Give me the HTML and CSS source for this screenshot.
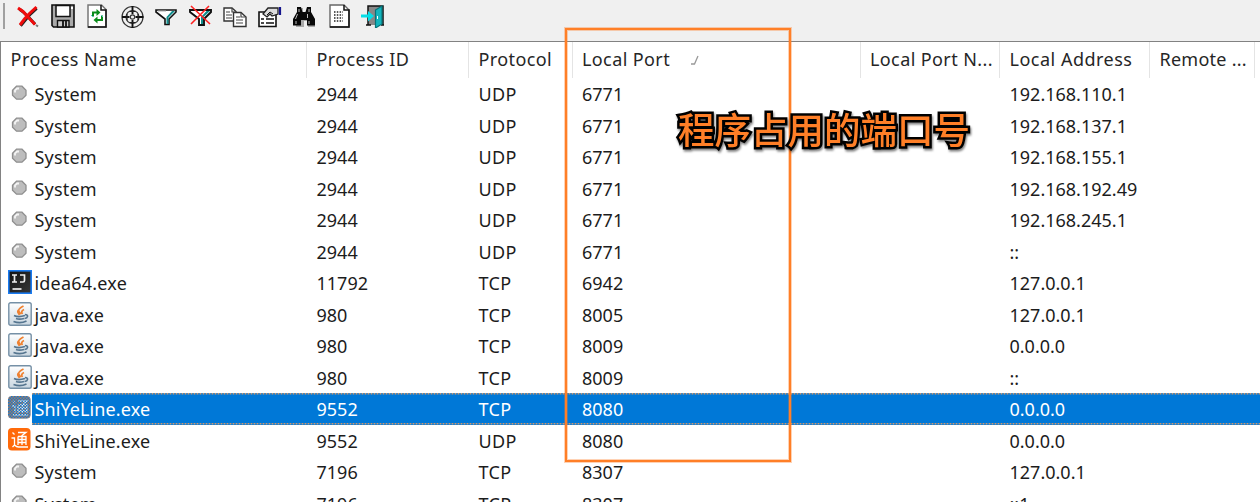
FILE: index.html
```html
<!DOCTYPE html>
<html lang="en">
<head>
<meta charset="utf-8">
<title>Ports</title>
<link rel="stylesheet" href="styles.css">
</head>
<body>
<svg class="defs" width="0" height="0" aria-hidden="true">
  <defs>
    <linearGradient id="tile" x1="0" y1="0" x2="0" y2="1"><stop offset="0" stop-color="#fff"/><stop offset="1" stop-color="#c9d6e0"/></linearGradient>
    <linearGradient id="ink" x1="0" y1="0" x2="1" y2="1"><stop offset="0" stop-color="#111"/><stop offset="1" stop-color="#383838"/></linearGradient>
    <pattern id="dither" width="3" height="3" patternUnits="userSpaceOnUse"><rect width="1.5" height="1.5" fill="#147bd1"/><rect x="1.5" y="1.5" width="1.5" height="1.5" fill="#147bd1"/></pattern>
    <symbol id="dot" viewBox="0 0 24 24"><path d="M8.500 5.200h5.500l4 4v5l-4 4H8.500l-4-4v-5z" fill="#bdbdbd" stroke="#8f8f8f" stroke-width="1.300"/><path d="M7 11.500V9.300L9 7.500h2" fill="none" stroke="#f4f4f4" stroke-width="1.800"/></symbol>
    <symbol id="java" viewBox="0 0 24 24"><rect x=".8" y=".8" width="22.400" height="22.400" rx="1.800" fill="url(#tile)" stroke="#7590a6" stroke-width="1.400"/><path d="M15.500 4C9 7.500 10 9 13 12M16 7.500c-3 1.500-2.500 3-1.500 4.500M10.500 8c-2 2 0 3 1 5" fill="none" stroke="#ef8130" stroke-width="1.700"/><path d="M6 13.500c3 1.500 8 1 11 0M8 16.500c2 .8 5 .8 8 0M17 12.500c4 0 3 3.500-.5 4M5.500 19.500c4 1.500 9 1.500 13-.5" fill="none" stroke="#55758f" stroke-width="1.600"/></symbol>
  </defs>
</svg>
<div class="window">
  <div class="toolbar">
    <span class="grip"></span>
    <svg viewBox="0 0 24 24"><path d="M20 21l2 1.500" stroke="#777" stroke-width="2"/><path d="M3 4.500l4 3 5 5 6.500 7M20 3.500l-6.500 6-5 6-4.500 5.500" fill="none" stroke="#222" stroke-width="3" transform="translate(.6 .8)"/><path d="M2 4l5 3.500 5 5.500 7 7.500M20.500 3l-7 6.500-5 5.500-4.500 6" fill="none" stroke="#f00b0b" stroke-width="3"/></svg>
    <svg viewBox="0 0 24 24"><path d="M1 1h22v22H2.500L1 21.500z" fill="#aaa" stroke="#111" stroke-width="1.600"/><path d="M5 1.500h14v11H5z" fill="#fff" stroke="#111" stroke-width="1.500"/><path d="M20 3h2v2h-2z" fill="#fff"/><path d="M6.500 16.500h11.500V23H6.500z" fill="#ccc" stroke="#111" stroke-width="1.400"/><path d="M12 17v6M15 17v6" stroke="#111" stroke-width="1.800"/></svg>
    <svg viewBox="0 0 24 24"><path d="M3 1h13.500L21 5.500V23H3z" fill="#fff" stroke="#777" stroke-width="1.500"/><path d="M16 1v5h5v17H3" fill="none" stroke="#111" stroke-width="1.500"/><path d="M8 12.500V8.500h4M17 11.500v4.500h-5" fill="none" stroke="#0b8c1a" stroke-width="2"/><path d="M11.500 5l4 3.500-4 3.500zM12.500 12.500L8.500 16l4 3.500z" fill="#0b8c1a"/><path d="M8 13l-2-2M16 11l2 2" stroke="#55c6cc"/></svg>
    <svg viewBox="0 0 24 24"><g fill="none" stroke="#333" stroke-width="1.200"><circle cx="12.500" cy="13" r="10.500"/><circle cx="12.500" cy="13" r="6.500"/><circle cx="12.500" cy="13" r="2.200"/></g><path d="M12.500 2v8M12.500 16v8M2 13h7.500M15.500 13h8" stroke="#111" stroke-width="1.900"/><path d="M9.500 7.500h6M9.500 18.500h6M7 10v6M18 10v6" stroke="#222" stroke-width="1.200"/></svg>
    <svg viewBox="0 0 24 24"><path d="M2 6h20v2l-7 7v5.500h-4V15L2 8z" fill="#fff" stroke="#111" stroke-width="1.600"/><path d="M21 7L14.500 13.500V20H12.500v-7l5.500-6z" fill="#118d8d"/><path d="M4 7h8" stroke="#aaa"/></svg>
    <svg viewBox="0 0 24 24"><path d="M1 6h21v2l-7 7v6h-5V15L1 8z" fill="#fff" stroke="#111" stroke-width="1.900"/><path d="M21 7L14 13.500V20h-2v-7l5.500-6z" fill="#118d8d"/><path d="M2 2l19 18M20 2L2 20" stroke="#ff2020" stroke-width="1.600"/></svg>
    <svg viewBox="0 0 24 24"><g fill="#fff" stroke="#333" stroke-width="1.400"><path d="M1 4h8l4 3.500V17H1z"/><path d="M10.500 8.500H18l5 4.500v9.500H10.500z"/></g><path d="M9 4v4h4M18 9v4h4.500M3 8h4M3 11h6M3 14h6M13 13h4M13 16h7M13 19h7" fill="none" stroke="#444" stroke-width="1.200"/></svg>
    <svg viewBox="0 0 24 24"><path d="M1 8h17v14.500H1z" fill="#fff" stroke="#111" stroke-width="1.600"/><path d="M5 10l5-6h10v6l-6 2-2-2-3 3z" fill="#ddd" stroke="#222" stroke-width="1.300"/><path d="M9 11l3-3 3 2" fill="none" stroke="#111"/><path d="M22 3v8" stroke="#15158d" stroke-width="2.200"/><path d="M3 15h3M8 15h8M3 19h3M8 19h8" stroke="#111" stroke-width="1.700"/></svg>
    <svg viewBox="0 0 24 24"><path d="M3 22v-7l3-7V3h4v5h4V3h4v5l4 7v7h-7v-6h-4v6z" fill="#aaa" transform="translate(1 1)"/><path d="M1 21.500V15l4-7V3h4l1.500 5h3L15 3h4v5l4 7v6.500h-8V16H9v5.500z" fill="#080808"/><path d="M7 5v3M17 5v3M5.500 10L3.500 15M15.500 10v4M4 17v3M17 17v3" stroke="#bbb"/></svg>
    <svg viewBox="0 0 24 24"><path d="M3 1h14l5 5v17H3z" fill="#fff" stroke="#666" stroke-width="1.400"/><path d="M17 1v5h5v17H3" fill="none" stroke="#111" stroke-width="1.500"/><path d="M7 8h9M7 11h9M7 14h9M7 17h9" stroke="#222" stroke-width="1.400" stroke-dasharray="1.500 1.300"/></svg>
    <svg viewBox="0 0 24 24"><path d="M7 21V2h15v19" fill="#888" stroke="#111" stroke-width="1.500"/><path d="M5 21h5M20 21h3" stroke="#111" stroke-width="1.500"/><path d="M14.500 6l6.500-4v18l-6.500 4z" fill="#13b5bd" stroke="#08747a" stroke-width="1.200"/><path d="M16.500 12v3" stroke="#fff"/><path d="M0 12h8" stroke="#06dfe8" stroke-width="3"/><path d="M7 7l6 5-6 5.500z" fill="#06dfe8"/></svg>
  </div>
  <div class="list">
    <div class="head grid">
      <span class="h-name">Process Name</span><span class="h-pid">Process ID</span><span class="h-proto">Protocol</span><span class="h-port">Local Port<svg class="sort" viewBox="0 0 9 11"><path d="M8 1L4.500 9H1" fill="none" stroke="#999" stroke-width="1.300"/></svg></span><span class="h-pname">Local Port N...</span><span class="h-addr">Local Address</span><span class="h-remote">Remote ...</span>
    </div>
    <div class="row grid"><span class="name"><svg><use href="#dot"/></svg><b class="sys">System</b></span><span>2944</span><span class="proto">UDP</span><span>6771</span><span></span><span>192.168.110.1</span></div>
    <div class="row grid"><span class="name"><svg><use href="#dot"/></svg><b class="sys">System</b></span><span>2944</span><span class="proto">UDP</span><span>6771</span><span></span><span>192.168.137.1</span></div>
    <div class="row grid"><span class="name"><svg><use href="#dot"/></svg><b class="sys">System</b></span><span>2944</span><span class="proto">UDP</span><span>6771</span><span></span><span>192.168.155.1</span></div>
    <div class="row grid"><span class="name"><svg><use href="#dot"/></svg><b class="sys">System</b></span><span>2944</span><span class="proto">UDP</span><span>6771</span><span></span><span>192.168.192.49</span></div>
    <div class="row grid"><span class="name"><svg><use href="#dot"/></svg><b class="sys">System</b></span><span>2944</span><span class="proto">UDP</span><span>6771</span><span></span><span>192.168.245.1</span></div>
    <div class="row grid"><span class="name"><svg><use href="#dot"/></svg><b class="sys">System</b></span><span>2944</span><span class="proto">UDP</span><span>6771</span><span></span><span>::</span></div>
    <div class="row grid"><span class="name"><svg viewBox="0 0 24 24"><rect x=".8" y=".8" width="22.400" height="22.400" fill="url(#ink)" stroke="#1a7bf0" stroke-width="1.600"/><path d="M4 5h5M6.500 5v7M4 12h5M12 5h4.500v5.500q0 1.500-1.500 1.500H12" fill="none" stroke="#eee" stroke-width="1.700"/><path d="M4.500 19h9" stroke="#eee" stroke-width="1.700"/></svg><b class="exe">idea64.exe</b></span><span>11792</span><span class="proto">TCP</span><span>6942</span><span></span><span>127.0.0.1</span></div>
    <div class="row grid"><span class="name"><svg><use href="#java"/></svg><b class="exe">java.exe</b></span><span>980</span><span class="proto">TCP</span><span>8005</span><span></span><span>127.0.0.1</span></div>
    <div class="row grid"><span class="name"><svg><use href="#java"/></svg><b class="exe">java.exe</b></span><span>980</span><span class="proto">TCP</span><span>8009</span><span></span><span>0.0.0.0</span></div>
    <div class="row grid"><span class="name"><svg><use href="#java"/></svg><b class="exe">java.exe</b></span><span>980</span><span class="proto">TCP</span><span>8009</span><span></span><span>::</span></div>
    <div class="row grid selected"><span class="name"><svg viewBox="0 0 24 24"><rect x="0" y="0" width="22.500" height="22.500" rx="4" fill="#a8795f"/><path d="M5 5l2 2M4 10h3v7M5 19h15M10 5h9l-4 3M10 9h9v8M10 9v8M10 12h9M10 15h9M14.500 8v9" fill="none" stroke="#e8eef5" stroke-width="1.300"/><rect x="0" y="0" width="22.500" height="22.500" rx="4" fill="url(#dither)"/></svg><b class="shi">ShiYeLine.exe</b></span><span>9552</span><span class="proto">TCP</span><span>8080</span><span></span><span>0.0.0.0</span></div>
    <div class="row grid"><span class="name"><svg viewBox="0 0 24 24"><rect x="0" y="0" width="22.500" height="22.500" rx="4" fill="#ff6a0a"/><path d="M4.500 4.500l2 2M3.500 10H6.500v7l-2 2M6.500 17q2 2 4 2H20M10 4.500h8l-4 3M10 8.500h8v8.500M10 8.500v8.500M10 11.500h8M10 14.500h8M14 7v10" fill="none" stroke="#fff" stroke-width="1.300"/></svg><b class="shi">ShiYeLine.exe</b></span><span>9552</span><span class="proto">UDP</span><span>8080</span><span></span><span>0.0.0.0</span></div>
    <div class="row grid"><span class="name"><svg><use href="#dot"/></svg><b class="sys">System</b></span><span>7196</span><span class="proto">TCP</span><span>8307</span><span></span><span>127.0.0.1</span></div>
    <div class="row grid"><span class="name"><svg><use href="#dot"/></svg><b class="sys">System</b></span><span>7196</span><span class="proto">TCP</span><span>8307</span><span></span><span>::1</span></div>
  </div>
  <div class="frame"></div>
  <div class="note">程序占用的端口号</div>
</div>
</body>
</html>
```
FILE: styles.css
```css
* { box-sizing: border-box; }
body { margin: 0; overflow: hidden; background: #fff; }
.defs { position: absolute; }
.window { position: relative; width: 1260px; height: 502px; overflow: hidden; font: 18px/32.5px "Noto Sans", "Noto Sans CJK SC", sans-serif; color: #1c1c1c; }
.toolbar { height: 40.5px; padding: 4px 0 0 3px; display: flex; align-items: flex-start; gap: 10.5px; background: #f0f0f0; }
.toolbar svg { width: 24px; height: 24px; flex: none; }
.grip { width: 2px; height: 26px; margin-right: .5px; margin-top: -1px; background: #a0a0a0; }
.list { height: 461.5px; border-top: 1.5px solid #828282; border-left: 1.5px solid #828282; overflow: hidden; }
.grid { display: grid; grid-template-columns: 306px 162px 103.5px 288px 139.5px 150px 105px; width: 1259px; }
.head { height: 36.5px; line-height: 35px; color: #262626; letter-spacing: .4px; }
.head span { border-right: 1.5px solid #e4e4e4; padding-left: 9.5px; white-space: nowrap; }
.head .h-name, .head .h-addr { letter-spacing: .5px; }
.head .h-remote { letter-spacing: .25px; }
.sort { width: 9px; height: 11px; margin-left: 20px; }
.row { height: 31.5px; }
.row > span { padding-left: 9.5px; white-space: nowrap; }
.row > .proto { letter-spacing: .4px; }
.row > .name { display: flex; align-items: center; height: 32.5px; padding-left: 6.5px; }
.name svg { width: 24px; height: 24px; flex: none; margin-right: 3px; margin-top: -2px; }
.name b { font-weight: 400; }
.name .sys, .name .exe { letter-spacing: .2px; }
.name .shi { letter-spacing: .1px; }
.selected {
  color: #fff;
  background:
    repeating-linear-gradient(90deg, #d19a6c 0 1.5px, #4f86b5 1.5px 3px) 31px 0 / 100% 1.5px no-repeat,
    repeating-linear-gradient(90deg, #d19a6c 0 1.5px, #4f86b5 1.5px 3px) 31px 100% / 100% 1.5px no-repeat,
    linear-gradient(#0078d7, #0078d7) 31px 0 / 100% 100% no-repeat;
}
.frame { position: absolute; left: 565px; top: 28px; width: 226px; height: 434px; border: 2px solid #ff7f27; box-shadow: 0 0 0 1px rgba(255,127,39,.35), inset 0 0 0 1px rgba(255,127,39,.35); }
.note { position: absolute; left: 678px; top: 107px; font: 500 36.5px/44px "Noto Sans CJK SC", sans-serif; color: #ff7f27; white-space: nowrap; -webkit-text-stroke: 5px #000; paint-order: stroke fill; filter: drop-shadow(1px 2px 1px rgba(0,0,0,.5)); }
```
